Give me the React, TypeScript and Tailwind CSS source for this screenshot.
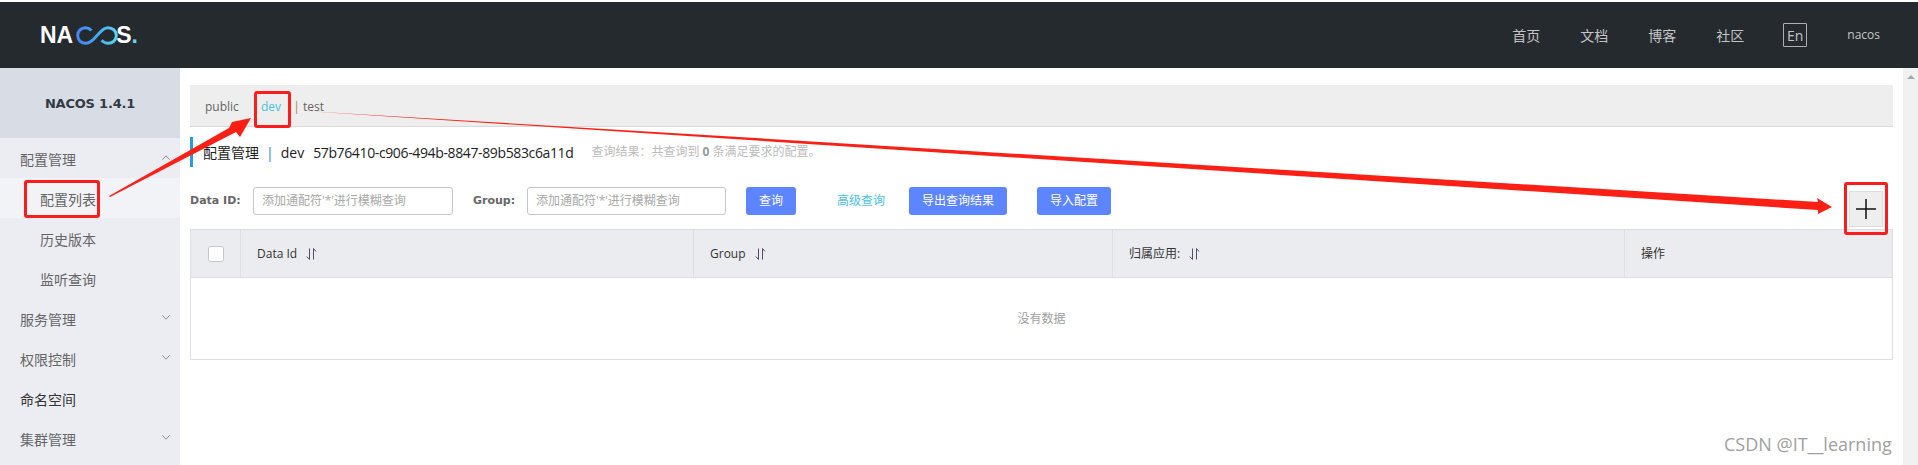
const font = "font-['Open_Sans','Noto_Sans_CJK_SC',sans-serif]";

const navLinks = ["首页", "文档", "博客", "社区"];

function SortIcon() {
  return (
    <svg width="11" height="12" viewBox="0 0 11 12" fill="none" stroke="#5b4a6e" strokeWidth="1" className="ml-[9px]">
      <path d="M3.5 0.5v11M0.8 8.5l2.7 3" />
      <path d="M7.5 11.5v-11M7.5 0.5l2.5 3" />
    </svg>
  );
}

function Chevron({ up }: { up?: boolean }) {
  return (
    <svg width="8" height="5" viewBox="0 0 8 5" fill="none" stroke="#8a8f99" strokeWidth="1" className="-mt-[4px]">
      <path d={up ? "M0.3 4.700L4 0.800L7.700 4.700" : "M0.3 0.300L4 4.200L7.700 0.300"} />
    </svg>
  );
}

function Logo() {
  return (
    <div className="flex items-center text-[23px] leading-none font-bold text-white font-['Liberation_Sans',sans-serif] ml-[40px]">
      <span>NA</span>
      <svg width="42" height="19" viewBox="0 0 42 19" fill="none" strokeWidth="3" className="ml-[3px]">
        <defs>
          <linearGradient id="nacosLogo" x1="0" x2="1" y1="0" y2="0">
            <stop offset="0" stopColor="#4a82f2" />
            <stop offset="0.5" stopColor="#3fa8ee" />
            <stop offset="1" stopColor="#5fd4ea" />
          </linearGradient>
        </defs>
        <path
          d="M15.500 4.500C13.500 2.500 11.500 1.700 9.500 1.700C5 1.700 1.700 5 1.700 9.500S5 17.300 9.500 17.300C15 17.300 18 12.500 21 9.500S27 1.700 32 1.700C36.800 1.700 40.300 5 40.300 9.500S36.800 17.300 32 17.300C29.500 17.300 27.500 16.300 25.500 14.300"
          stroke="url(#nacosLogo)"
        />
      </svg>
      <span className="-ml-[2px]">S</span>
      <span className="text-[#5fd8e8]">.</span>
    </div>
  );
}

function Header() {
  return (
    <div className="h-[66px] bg-[#252a2f] flex items-center justify-between shrink-0">
      <Logo />
      <div className="flex items-center text-[14px] text-[#c5c5c5] pr-[38px]">
        {navLinks.map((link) => (
          <span key={link} className="mr-[40px] w-[28px]">
            {link}
          </span>
        ))}
        <span className="w-[24px] h-[24px] border border-[#b0b0b0] rounded-[1px] flex items-center justify-center text-[14px] mr-[40px] -ml-[1px]">
          En
        </span>
        <span className="text-[12px]">nacos</span>
      </div>
    </div>
  );
}

function MenuItem({ label, chevron, dark }: { label: string; chevron?: "up" | "down"; dark?: boolean }) {
  return (
    <div className={`h-[40px] flex items-center justify-between pl-[20px] pr-[10px] pt-[2px] text-[14px] ${dark ? "text-[#333]" : "text-[#666]"}`}>
      <span>{label}</span>
      {chevron && <Chevron up={chevron === "up"} />}
    </div>
  );
}

function SubItem({ label, active }: { label: string; active?: boolean }) {
  return (
    <div className={`h-[40px] flex items-center pl-[40px] pt-[2px] text-[14px] text-[#666] ${active ? "bg-[#f2f3f7]" : ""}`}>
      {label}
    </div>
  );
}

function Sidebar() {
  return (
    <div className="w-[180px] bg-[#ebedf2] shrink-0 flex flex-col">
      <div className="h-[70px] bg-[#d8dce4] flex items-center justify-center pt-[2px] text-[13px] tracking-[-0.2px] font-bold text-[#333a45] font-['DejaVu_Sans',sans-serif]">
        NACOS 1.4.1
      </div>
      <MenuItem label="配置管理" chevron="up" />
      <SubItem label="配置列表" active />
      <SubItem label="历史版本" />
      <SubItem label="监听查询" />
      <MenuItem label="服务管理" chevron="down" />
      <MenuItem label="权限控制" chevron="down" />
      <MenuItem label="命名空间" dark />
      <MenuItem label="集群管理" chevron="down" />
    </div>
  );
}

function Tabs() {
  return (
    <div className="h-[42px] bg-[#eeeeee] border-b border-[#d9d9d9] flex items-center pl-[15px] pt-[3px] text-[12px] text-[#666]">
      <span className="w-[47px]">public</span>
      <span className="text-[#a8895a] w-[9px]">|</span>
      <span className="text-[#47c1e0] w-[32px]">dev</span>
      <span className="text-[#a8895a] w-[10px] text-[13px]">|</span>
      <span>test</span>
    </div>
  );
}

function Title() {
  return (
    <div className="mt-[10px] h-[30px] border-l-[3px] border-[#2a9bd6] flex items-center pl-[10px] text-[14px] text-[#222] whitespace-nowrap">
      <span>配置管理</span>
      <span className="mx-[7px] text-[#2a7fc0]">|</span>
      <span>dev</span>
      <span className="ml-[9px] tracking-[-0.37px]">57b76410-c906-494b-8847-89b583c6a11d</span>
      <span className="ml-[18px] text-[12px] text-[#bbbbbb]">
        查询结果：共查询到 <b className="text-[#999]">0</b> 条满足要求的配置。
      </span>
    </div>
  );
}

function SearchInput({ width }: { width: string }) {
  return (
    <div className={`${width} h-[28px] border border-[#c4c6cf] rounded-[3px] flex items-center px-[8px] text-[12px] text-[#a8a8a8] whitespace-nowrap`}>
      添加通配符'*'进行模糊查询
    </div>
  );
}

function Btn({ label, width, className }: { label: string; width: string; className: string }) {
  return (
    <div className={`${width} ${className} h-[28px] bg-[#5c85ff] rounded-[3px] flex items-center justify-center text-[12px] text-white`}>
      {label}
    </div>
  );
}

function SearchRow() {
  return (
    <div className="mt-[20px] flex items-center text-[12px]">
      <span className="w-[63px] text-[11px] font-bold text-[#666] font-['DejaVu_Sans',sans-serif]">Data ID:</span>
      <SearchInput width="w-[200px]" />
      <span className="ml-[20px] w-[54px] text-[11px] font-bold text-[#666] font-['DejaVu_Sans',sans-serif]">Group:</span>
      <SearchInput width="w-[199px]" />
      <Btn label="查询" width="w-[50px]" className="ml-[20px]" />
      <span className="ml-[41px] w-[48px] text-[#47c1e0] whitespace-nowrap">高级查询</span>
      <Btn label="导出查询结果" width="w-[98px]" className="ml-[24px]" />
      <Btn label="导入配置" width="w-[74px]" className="ml-[30px]" />
    </div>
  );
}

function HeaderCell({ label, width, sort }: { label: string; width: string; sort?: boolean }) {
  return (
    <div className={`${width} shrink-0 h-full border-r border-[#dcdee3] last:border-r-0 flex items-center pl-[16px] text-[12px] text-[#333]`}>
      <span>{label}</span>
      {sort && <SortIcon />}
    </div>
  );
}

function DataTable() {
  return (
    <div className="mt-[14px] border border-[#dcdee3] h-[131px] flex flex-col">
      <div className="h-[48px] bg-[#ebecf0] border-b border-[#dcdee3] flex items-center shrink-0">
        <div className="w-[50px] shrink-0 h-full border-r border-[#dcdee3] flex items-center justify-center">
          <div className="w-[16px] h-[16px] bg-white border border-[#c4c6cf] rounded-[3px]" />
        </div>
        <HeaderCell label="Data Id" width="w-[453px]" sort />
        <HeaderCell label="Group" width="w-[419px]" sort />
        <HeaderCell label="归属应用:" width="w-[512px]" sort />
        <HeaderCell label="操作" width="flex-1" />
      </div>
      <div className="flex-1 flex items-center justify-center text-[12px] text-[#a0a0a0]">没有数据</div>
    </div>
  );
}

// red markup drawn over the page by whoever took the screenshot
function Annotations() {
  return (
    <>
      <div className="absolute left-[24px] top-[180px] w-[76px] h-[38px] border-[3px] border-[#fb1c1c] rounded-[3px]" />
      <div className="absolute left-[254px] top-[91px] w-[37px] h-[37px] border-[3px] border-[#fb1c1c] rounded-[3px]" />
      <div className="absolute left-[1844px] top-[182px] w-[44px] h-[53px] border-[3px] border-[#fb1c1c] rounded-[3px]" />
      <svg className="absolute left-0 top-0 pointer-events-none" width="1918" height="465" viewBox="0 0 1918 465">
        <path d="M109 196L229 128L232 122L251 118L240 137L236 132L110 197Z" fill="#fb2016" />
        <path d="M305 111L1818 202L1817 198L1832 207L1818 214L1818 210Z" fill="#fb2016" />
      </svg>
    </>
  );
}

export default function App() {
  return (
    <div className={`${font} relative w-[1918px] h-[465px] overflow-hidden bg-white flex flex-col pt-[2px]`}>
      <Header />
      <div className="flex flex-1 min-h-0">
        <Sidebar />
        <div className="flex-1 min-w-0 pl-[10px] pr-[10px] pt-[17px]">
          <Tabs />
          <Title />
          <SearchRow />
          <DataTable />
        </div>
        <div className="w-[15px] bg-[#f1f1f1] shrink-0 flex justify-center pt-[7px]">
          <div className="w-0 h-0 border-x-[4px] border-x-transparent border-b-[4px] border-b-[#a8a8a8]" />
        </div>
      </div>
      {/* add button sits over the content at the right edge */}
      <div className="absolute left-[1849px] top-[191px] w-[34px] h-[36px] bg-[#eeeeee] border border-[#dcdcdc] flex items-center justify-center">
        <svg width="20" height="20" viewBox="0 0 20 20" stroke="#111" strokeWidth="1.500">
          <path d="M0 10h20M10 0v20" />
        </svg>
      </div>
      <Annotations />
      <div className="absolute left-[1724px] top-[432px] text-[18px] leading-[24px] text-[#a0a0a0]">
        CSDN @IT__learning
      </div>
    </div>
  );
}
